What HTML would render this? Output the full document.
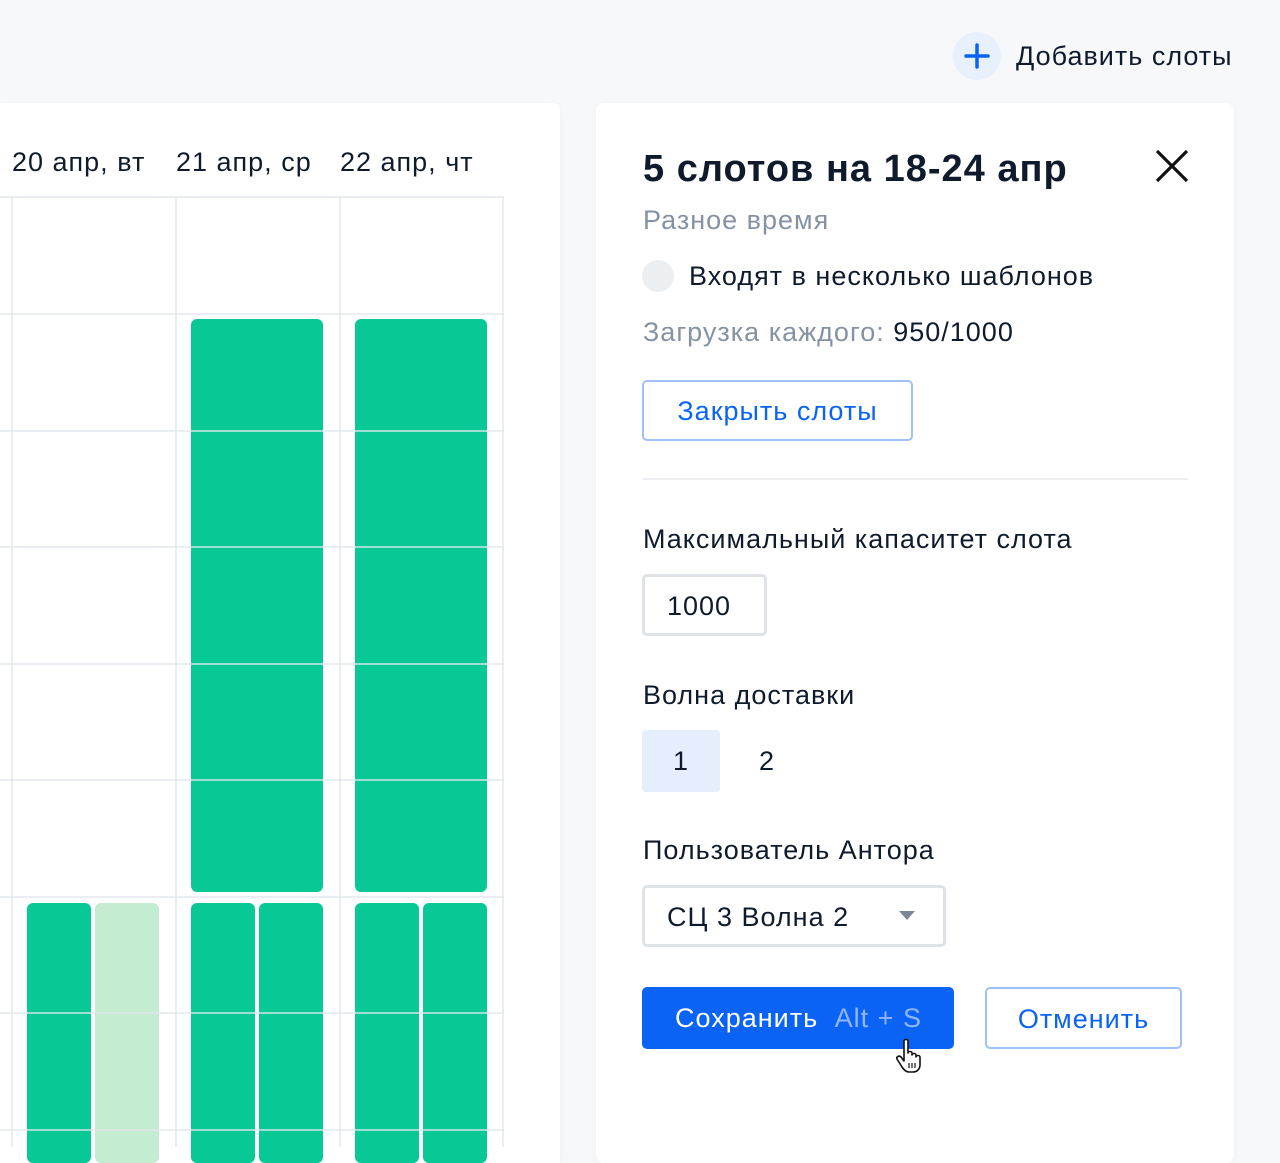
<!DOCTYPE html>
<html><head><meta charset="utf-8"><style>
*{margin:0;padding:0;box-sizing:border-box}
body{width:1280px;height:1143px;background:#f7f8fa;font-family:"Liberation Sans",sans-serif;color:#0f1b2d;position:relative;overflow:hidden}
.a{position:absolute}
.card{background:#fff;box-shadow:0 2px 8px rgba(0,0,0,0.04)}
.g{background:#08c896;border-radius:6px}
.vl{position:absolute;width:2px;background:rgba(225,230,236,0.7)}
.hl{position:absolute;height:2px;background:rgba(225,230,236,0.7)}
.t{font-size:27px;white-space:nowrap;letter-spacing:1px}
</style></head><body>
<div class="a" style="left:953px;top:32px;width:48px;height:48px;border-radius:50%;background:#e8effd"></div>
<svg class="a" style="left:963px;top:42px" width="28" height="28"><path d="M14 3V25M3 14H25" stroke="#0b63f6" stroke-width="3.5" stroke-linecap="round"/></svg>
<div class="a t" style="left:1016px;top:41px">Добавить слоты</div>

<div class="a card" style="left:0;top:103px;width:560px;height:1060px;border-radius:0 8px 0 0"></div>
<div class="a t" style="left:12px;top:147px">20 апр, вт</div>
<div class="a t" style="left:176px;top:147px">21 апр, ср</div>
<div class="a t" style="left:340px;top:147px">22 апр, чт</div>

<div class="a g" style="left:191px;top:319px;width:132px;height:573px"></div>
<div class="a g" style="left:355px;top:319px;width:132px;height:573px"></div>
<div class="a g" style="left:27px;top:903px;width:64px;height:260px"></div>
<div class="a" style="left:95px;top:903px;width:64px;height:260px;background:#c4ecd0;border-radius:6px"></div>
<div class="a g" style="left:191px;top:903px;width:64px;height:260px"></div>
<div class="a g" style="left:259px;top:903px;width:64px;height:260px"></div>
<div class="a g" style="left:355px;top:903px;width:64px;height:260px"></div>
<div class="a g" style="left:423px;top:903px;width:64px;height:260px"></div>

<div class="vl" style="left:11px;top:197px;height:950px"></div>
<div class="vl" style="left:175px;top:197px;height:950px"></div>
<div class="vl" style="left:339px;top:197px;height:950px"></div>
<div class="vl" style="left:502px;top:197px;height:950px"></div>
<div class="hl" style="left:0;width:504px;top:196px"></div>
<div class="hl" style="left:0;width:504px;top:313px"></div>
<div class="hl" style="left:0;width:504px;top:430px"></div>
<div class="hl" style="left:0;width:504px;top:546px"></div>
<div class="hl" style="left:0;width:504px;top:663px"></div>
<div class="hl" style="left:0;width:504px;top:779px"></div>
<div class="hl" style="left:0;width:504px;top:896px"></div>
<div class="hl" style="left:0;width:504px;top:1012px"></div>
<div class="hl" style="left:0;width:504px;top:1129px"></div>

<div class="a card" style="left:596px;top:103px;width:638px;height:1060px;border-radius:8px"></div>
<div class="a" style="left:643px;top:148px;font-size:38px;font-weight:bold;white-space:nowrap;letter-spacing:1px">5 слотов на 18-24 апр</div>
<svg class="a" style="left:1154px;top:148px" width="36" height="36"><path d="M3 3L33 33M33 3L3 33" stroke="#111" stroke-width="3.2"/></svg>
<div class="a t" style="left:643px;top:205px;color:#8592a3">Разное время</div>
<div class="a" style="left:642px;top:260px;width:32px;height:32px;border-radius:50%;background:#eceff2"></div>
<div class="a t" style="left:689px;top:261px">Входят в несколько шаблонов</div>
<div class="a t" style="left:643px;top:317px;color:#8592a3">Загрузка каждого: <span style="color:#0f1b2d">950/1000</span></div>
<div class="a t" style="left:642px;top:380px;width:271px;height:61px;border:2px solid #9fc0f8;border-radius:5px;color:#0b63f6;text-align:center;line-height:59px">Закрыть слоты</div>
<div class="a" style="left:643px;top:478px;width:545px;height:2px;background:#eceef1"></div>
<div class="a t" style="left:643px;top:524px">Максимальный капаситет слота</div>
<div class="a t" style="left:642px;top:574px;width:125px;height:62px;border:3px solid #dfe3e8;border-radius:5px;padding-left:22px;line-height:58px">1000</div>
<div class="a t" style="left:643px;top:680px">Волна доставки</div>
<div class="a t" style="left:642px;top:730px;width:78px;height:62px;background:#e5eefd;border-radius:4px;text-align:center;line-height:62px">1</div>
<div class="a t" style="left:759px;top:730px;line-height:62px">2</div>
<div class="a t" style="left:643px;top:835px">Пользователь Антора</div>
<div class="a t" style="left:642px;top:885px;width:304px;height:62px;border:3px solid #dfe3e8;border-radius:5px;padding-left:22px;line-height:58px">СЦ 3 Волна 2</div>
<svg class="a" style="left:898px;top:910px" width="18" height="12"><path d="M1 1H17L9 10Z" fill="#7a8796"/></svg>
<div class="a t" style="left:642px;top:987px;width:312px;height:62px;background:#0b63f6;border-radius:5px;color:#fff;line-height:62px;padding-left:33px">Сохранить <span style="color:#8fb6fb;margin-left:8px">Alt + S</span></div>
<div class="a t" style="left:985px;top:987px;width:197px;height:62px;border:2px solid #9fc0f8;border-radius:5px;color:#0b63f6;text-align:center;line-height:60px">Отменить</div>
<svg class="a" style="left:893px;top:1038px" width="34" height="36"><path d="M11 3C11 1 15 1 15 3V15C15 13 19 13 19 15V17C19 15 23 15 23 17V19C23 17 27 17 27 19V27C27 31 24 34 20 34H16C13 34 11 32 9 29L4 21C3 19 6 17 8 19L11 23Z" fill="#fff" stroke="#111" stroke-width="1.6" stroke-linejoin="round"/><path d="M16 25V30M19 25V30M22 25V30" stroke="#111" stroke-width="1.2"/></svg>
</body></html>
